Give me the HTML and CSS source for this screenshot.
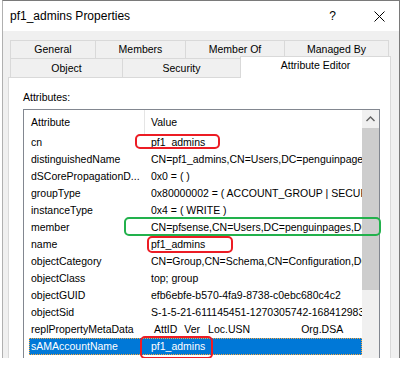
FILE: index.html
```html
<!DOCTYPE html>
<html lang="en">
<head>
    <meta charset="UTF-8">
    <title>pf1_admins Properties</title>
    <link rel="stylesheet" href="styles.css">
</head>
<body>
    <div class="window">
        <div class="titlebar">
            <span class="title">pf1_admins Properties</span>
            <span class="help">?</span>
            <svg class="close" width="11" height="11" viewBox="0 0 11 11">
                <path d="M0.5 0.5 L10.5 10.5 M10.5 0.5 L0.5 10.5" stroke="#000" stroke-width="1" fill="none"/>
            </svg>
        </div>
        <div class="dialog">
            <div class="tabrow back">
                <div class="tab w85">General</div>
                <div class="tab w90">Members</div>
                <div class="tab w99">Member Of</div>
                <div class="tab w105 last">Managed By</div>
            </div>
            <div class="tabrow front">
                <div class="tab w112">Object</div>
                <div class="tab w118">Security</div>
                <div class="tab w151 selected">Attribute Editor</div>
            </div>
            <div class="panel">
                <div class="label">Attributes:</div>
                <div class="listbox">
                    <div class="list">
                        <div class="header">
                            <div class="hcell name">Attribute</div>
                            <div class="hcell value">Value</div>
                        </div>
                        <div class="row"><div class="name">cn</div><div class="value">pf1_admins</div></div>
                        <div class="row"><div class="name">distinguishedName</div><div class="value">CN=pf1_admins,CN=Users,DC=penguinpages,DC=local</div></div>
                        <div class="row"><div class="name">dSCorePropagationD...</div><div class="value">0x0 = ( )</div></div>
                        <div class="row"><div class="name">groupType</div><div class="value">0x80000002 = ( ACCOUNT_GROUP | SECURITY_ENABLED )</div></div>
                        <div class="row"><div class="name">instanceType</div><div class="value">0x4 = ( WRITE )</div></div>
                        <div class="row"><div class="name">member</div><div class="value">CN=pfsense,CN=Users,DC=penguinpages,DC=local</div></div>
                        <div class="row"><div class="name">name</div><div class="value">pf1_admins</div></div>
                        <div class="row"><div class="name">objectCategory</div><div class="value">CN=Group,CN=Schema,CN=Configuration,DC=penguinpages</div></div>
                        <div class="row"><div class="name">objectClass</div><div class="value">top; group</div></div>
                        <div class="row"><div class="name">objectGUID</div><div class="value">efb6ebfe-b570-4fa9-8738-c0ebc680c4c2</div></div>
                        <div class="row"><div class="name">objectSid</div><div class="value">S-1-5-21-611145451-1270305742-1684129834-1105</div></div>
                        <div class="row"><div class="name">replPropertyMetaData</div><div class="value"><span class="m1">AttID</span><span class="m2">Ver</span><span class="m3">Loc.USN</span><span class="m4">Org.DSA</span></div></div>
                        <div class="row selected"><div class="name">sAMAccountName</div><div class="value">pf1_admins</div></div>
                        <div class="row"><div class="name">sAMAccountType</div><div class="value">0x10000000 = ( GROUP_OBJECT )</div></div>
                    </div>
                    <div class="scrollbar">
                        <div class="arrow up"><svg width="9" height="6" viewBox="0 0 9 6"><path d="M0.5 5 L4.5 1 L8.5 5" stroke="#606060" stroke-width="1.4" fill="none"/></svg></div>
                        <div class="thumb"></div>
                        <div class="track"></div>
                        <div class="arrow down"><svg width="9" height="6" viewBox="0 0 9 6"><path d="M0.5 1 L4.5 5 L8.5 1" stroke="#606060" stroke-width="1.4" fill="none"/></svg></div>
                    </div>
                    <div class="mark red mark-cn"></div>
                    <div class="mark green mark-member"></div>
                    <div class="mark red mark-name"></div>
                    <div class="mark red mark-sam"></div>
                </div>
            </div>
        </div>
    </div>
</body>
</html>
```

FILE: styles.css
```css
body {
    margin: 0;
    background: #fff;
    font-family: "Liberation Sans", Arial, sans-serif;
    font-size: 10.5px;
    color: #000;
    overflow: hidden;
}
.window {
    width: 396px;
    height: 357px;
    margin-left: 2px;
    border-top: 1px solid #7a7a7a;
    border-left: 1px solid #b0b0b0;
    border-right: 1px solid #7a7a7a;
    background: #f0f0f0;
    display: flex;
    flex-direction: column;
    overflow: hidden;
}
.titlebar {
    height: 30px;
    background: #fff;
    display: flex;
    align-items: center;
    padding-left: 7px;
    flex-shrink: 0;
}
.title {
    font-size: 12px;
    flex: 1;
}
.help {
    font-size: 12px;
    margin-right: 38px;
}
.close {
    margin-right: 14px;
}
.dialog {
    flex: 1;
    display: flex;
    flex-direction: column;
    padding: 9px 0 0 5px;
}
.tabrow {
    display: flex;
    margin-left: 2px;
}
.tab {
    box-sizing: border-box;
    border: 1px solid #d9d9d9;
    border-right: none;
    background: #f0f0f0;
    text-align: center;
    white-space: nowrap;
}
.tab.last {
    border-right: 1px solid #d9d9d9;
}
.back .tab {
    height: 18px;
    line-height: 16px;
    border-bottom: none;
}
.front .tab {
    height: 19px;
    line-height: 19px;
    border-bottom: none;
}
.front .tab.selected {
    background: #fff;
    border-right: 1px solid #d9d9d9;
    height: 22px;
    margin-top: -2px;
    margin-bottom: -1px;
    line-height: 17px;
    position: relative;
    z-index: 1;
}
.w85 { width: 85px; }
.w90 { width: 90px; }
.w99 { width: 99px; }
.w105 { width: 105px; }
.w112 { width: 112px; }
.w118 { width: 118px; }
.w151 { width: 151px; }
.panel {
    flex: 1;
    width: 381px;
    background: #fff;
    border: 1px solid #d9d9d9;
    border-bottom: none;
    padding-top: 13px;
}
.label {
    margin-left: 14px;
    height: 18px;
}
.listbox {
    position: relative;
    margin-left: 14px;
    width: 355px;
    height: 260px;
    border: 1px solid #828790;
    display: flex;
}
.list {
    width: 333px;
    padding-left: 5px;
    overflow: hidden;
}
.header {
    display: flex;
    height: 24px;
    line-height: 25px;
}
.hcell.name {
    width: 113px;
    flex-shrink: 0;
    padding-left: 2px;
    border-right: 1px solid #e5e5e5;
}
.hcell.value {
    padding-left: 6px;
}
.row {
    display: flex;
    height: 17px;
    line-height: 17px;
    white-space: nowrap;
}
.row .name {
    width: 118px;
    flex-shrink: 0;
    padding-left: 2px;
    overflow: hidden;
}
.row .value {
    flex-shrink: 0;
    padding-left: 2px;
}
.row.selected {
    background: #0078d7;
    color: #fff;
    outline: 1px dotted #f5a742;
    outline-offset: -1px;
}
.m1 { margin-left: 3px; }
.m2 { margin-left: 7px; }
.m3 { margin-left: 8px; }
.m4 { margin-left: 51px; }
.scrollbar {
    width: 17px;
    flex-shrink: 0;
    background: #f0f0f0;
    display: flex;
    flex-direction: column;
}
.arrow {
    height: 17px;
    display: flex;
    align-items: center;
    justify-content: center;
}
.thumb {
    height: 162px;
    margin-top: 1px;
    background: #cdcdcd;
}
.track {
    flex: 1;
}
.mark {
    position: absolute;
    box-sizing: border-box;
    border-radius: 5px;
}
.red {
    border: 2px solid #ec1c24;
}
.green {
    border: 2px solid #22b14c;
}
.mark-cn { left: 111px; top: 24px; width: 85px; height: 15px; }
.mark-member { left: 100px; top: 107px; width: 257px; height: 19px; }
.mark-name { left: 123px; top: 126px; width: 86px; height: 17px; }
.mark-sam { left: 116px; top: 226px; width: 73px; height: 23px; }
```
